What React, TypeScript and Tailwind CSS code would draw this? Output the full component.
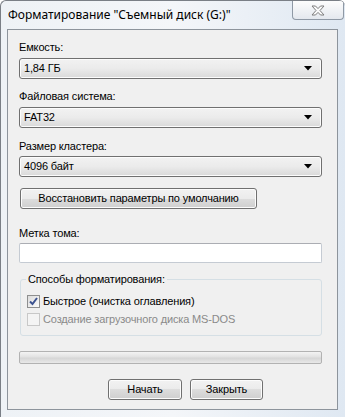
const titleFont = { fontFamily: '"Noto Sans", "Liberation Sans", sans-serif' };
const bodyFont = { fontFamily: '"Liberation Sans", Arial, sans-serif' };

function Combo({ value }: { value: string }) {
  return (
    <div className="flex h-[21px] w-[303px] items-center justify-between rounded-[3px] border border-[#707070] bg-gradient-to-b from-[#f2f2f2] via-[#ebebeb] to-[#d9d9d9] pl-[4px] pr-[9px] text-black shadow-[inset_0_0_0_1px_#fcfcfc]">
      <span className="leading-none">{value}</span>
      <svg width="8" height="5" viewBox="0 0 8 5" aria-hidden>
        <path d="M0 0 H8 L4 4.5 Z" fill="#000" />
      </svg>
    </div>
  );
}

function Button({ label, className }: { label: string; className: string }) {
  return (
    <div
      className={
        "flex h-[21px] items-center justify-center whitespace-nowrap rounded-[3px] border border-[#707070] bg-[linear-gradient(#f2f2f2_0%,#ebebeb_50%,#dddddd_50%,#cfcfcf_100%)] text-black shadow-[inset_0_0_0_1px_#fcfcfc] " +
        className
      }
    >
      {label}
    </div>
  );
}

function Checkbox({ checked, disabled }: { checked?: boolean; disabled?: boolean }) {
  return (
    <div
      className={
        "flex h-[13px] w-[13px] shrink-0 items-center justify-center border " +
        (disabled ? "border-[#c8c8c8] bg-[#f4f4f4]" : "border-[#8e8f8f] bg-gradient-to-br from-[#dcdcdc] to-[#fbfbfb]")
      }
    >
      {checked && (
        <svg width="9" height="9" viewBox="0 0 9 9" aria-hidden>
          <path d="M1 4.5 L3.5 7 L8 1" stroke="#3c5390" strokeWidth="2" fill="none" />
        </svg>
      )}
    </div>
  );
}

export default function App() {
  return (
    <div
      style={titleFont}
      className="relative flex h-[417px] w-[345px] flex-col overflow-hidden rounded-t-[6px] border-l border-t border-[#7a7f86] bg-gradient-to-r from-[#eef2f6] via-[#f4f6f9] to-[#dfe8f2]"
    >
      {/* title bar */}
      <div className="flex h-[28px] items-start justify-between">
        <span className="pl-[7px] pt-[6px] text-[12px] leading-[15px] text-black">
          Форматирование "Съемный диск (G:)"
        </span>
        <div className="mr-[1px] flex h-[19px] w-[52px] items-center justify-center rounded-b-[4px] border border-t-0 border-[#8f99a5] bg-gradient-to-b from-[#fdfdfd] to-[#e4e8ee]">
          <svg width="14" height="11" viewBox="0 0 14 11" aria-hidden>
            <path
              d="M1 1 H4.5 L7 3.6 L9.5 1 H13 L9 5.5 L13 10 H9.5 L7 7.4 L4.5 10 H1 L5 5.5 Z"
              fill="#fafafa"
              stroke="#7d7d7d"
              strokeWidth="1"
            />
          </svg>
        </div>
      </div>

      {/* client area */}
      <div
        style={bodyFont}
        className="ml-[6px] flex h-[381px] w-[331px] flex-col border border-[#8d949c] bg-[#f0f0f0] pl-[11px] text-[11px] leading-[15px] tracking-[-0.15px] text-black"
      >
        <div className="mt-[10px]">Емкость:</div>
        <div className="mt-[3px]">
          <Combo value="1,84 ГБ" />
        </div>
        <div className="mt-[10px]">Файловая система:</div>
        <div className="mt-[3px]">
          <Combo value="FAT32" />
        </div>
        <div className="mt-[11px]">Размер кластера:</div>
        <div className="mt-[2px]">
          <Combo value="4096 байт" />
        </div>
        <div className="mt-[11px] pl-[1px]">
          <Button label="Восстановить параметры по умолчанию" className="w-[237px]" />
        </div>
        <div className="mt-[17px]">Метка тома:</div>
        <div className="mt-[2px] h-[20px] w-[303px] rounded-[2px] border border-[#c5cbd3] border-t-[#abadb3] bg-white" />

        {/* group box */}
        <div className="relative ml-[1px] mt-[16px] h-[57px] w-[302px] rounded-[3px] border border-[#d5dfe5] pl-[6px] pt-[14px]">
          <span className="absolute -top-[8px] left-[5px] bg-[#f0f0f0] px-[2px] leading-[15px]">
            Способы форматирования:
          </span>
          <div className="flex items-center gap-[3px]">
            <Checkbox checked />
            <span>Быстрое (очистка оглавления)</span>
          </div>
          <div className="mt-[3px] flex items-center gap-[3px] text-[#8a8a8a]">
            <Checkbox disabled />
            <span>Создание загрузочного диска MS-DOS</span>
          </div>
        </div>

        {/* progress */}
        <div className="mt-[15px] h-[13px] w-[303px] rounded-[2px] border border-[#b2b2b2] bg-[linear-gradient(#f3f3f3_0%,#e2e2e2_45%,#d6d6d6_55%,#e8e8e8_100%)]" />

        <div className="mt-[15px] flex gap-[8px] pl-[89px]">
          <Button label="Начать" className="w-[74px]" />
          <Button label="Закрыть" className="w-[73px]" />
        </div>
      </div>
    </div>
  );
}
